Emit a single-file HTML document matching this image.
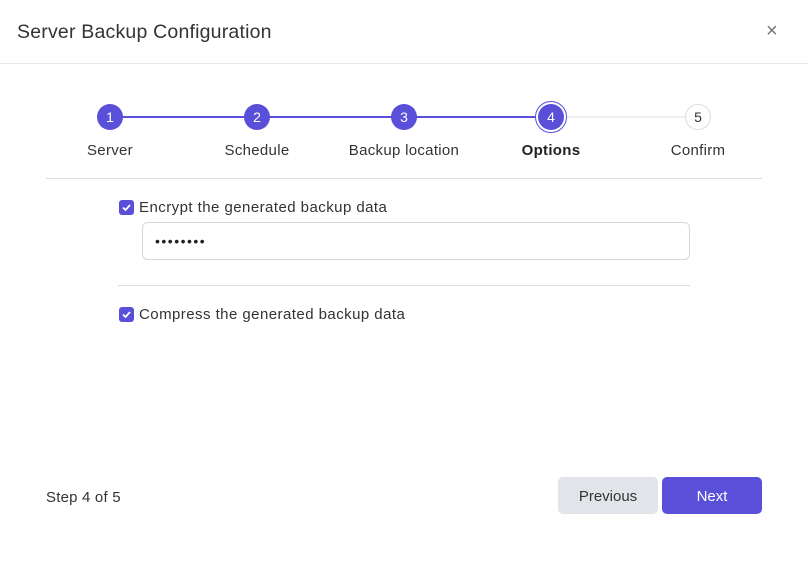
<!DOCTYPE html>
<html><head><meta charset="utf-8"><style>
*{box-sizing:border-box;margin:0;padding:0}
body{width:808px;height:562px;background:#fff;font-family:"Liberation Sans",sans-serif;color:#222;position:relative;overflow:hidden}
.a{position:absolute}
.c{position:absolute;width:26px;height:26px;border-radius:50%;background:#5a4fd8;color:#fff;font-size:14px;text-align:center;line-height:26px;top:104px}
.l{position:absolute;top:142px;font-size:15px;color:#333;width:140px;text-align:center;letter-spacing:0.3px}
.cb{position:absolute;width:15px;height:15px;border-radius:3px;background:#5a4fd8}
.t{position:absolute;font-size:15px;color:#333;letter-spacing:0.45px}
</style></head><body>
<div class="a" style="left:17px;top:21px;font-size:19.5px;color:#333;letter-spacing:0.2px">Server Backup Configuration</div>
<div class="a" style="left:766px;top:20px;font-size:20px;color:#777">×</div>
<div class="a" style="left:0;top:63px;width:808px;height:1px;background:#e8e8ec"></div>
<div class="a" style="left:110px;top:116px;width:441px;height:2px;background:#5a4fd8"></div>
<div class="a" style="left:551px;top:116px;width:147px;height:2px;background:#eceef2"></div>
<div class="c" style="left:97px">1</div>
<div class="c" style="left:244px">2</div>
<div class="c" style="left:391px">3</div>
<div class="a" style="left:535px;top:101px;width:32px;height:32px;border-radius:50%;border:1.5px solid #5a4fd8;background:#fff"></div>
<div class="c" style="left:538px">4</div>
<div class="c" style="left:685px;background:#fff;color:#333;border:1px solid #ddd;line-height:24px">5</div>
<div class="l" style="left:40px">Server</div>
<div class="l" style="left:187px">Schedule</div>
<div class="l" style="left:334px">Backup location</div>
<div class="l" style="left:481px;font-weight:bold;color:#222">Options</div>
<div class="l" style="left:628px">Confirm</div>
<div class="a" style="left:46px;top:178px;width:716px;height:1px;background:#ddd"></div>
<div class="cb" style="left:119px;top:200px"><svg width="15" height="15"><path d="M4 7.5l2.5 2.5 4.5-5" stroke="#fff" stroke-width="1.8" fill="none"/></svg></div>
<div class="t" style="left:139px;top:199px">Encrypt the generated backup data</div>
<div class="a" style="left:142px;top:222px;width:548px;height:38px;border:1px solid #d8d8dc;border-radius:6px;font-size:14px;padding-left:12px;line-height:36px;letter-spacing:1.5px">••••••••</div>
<div class="a" style="left:118px;top:285px;width:572px;height:1px;background:#ddd"></div>
<div class="cb" style="left:119px;top:307px"><svg width="15" height="15"><path d="M4 7.5l2.5 2.5 4.5-5" stroke="#fff" stroke-width="1.8" fill="none"/></svg></div>
<div class="t" style="left:139px;top:306px">Compress the generated backup data</div>
<div class="a" style="left:46px;top:489px;font-size:15px;color:#333;letter-spacing:0.2px">Step 4 of 5</div>
<div class="a" style="left:558px;top:477px;width:100px;height:37px;border-radius:5px;background:#e1e4e8;color:#333;font-size:15px;text-align:center;line-height:39px">Previous</div>
<div class="a" style="left:662px;top:477px;width:100px;height:37px;border-radius:5px;background:#5a4fd8;color:#fff;font-size:15px;text-align:center;line-height:39px">Next</div>
</body></html>
